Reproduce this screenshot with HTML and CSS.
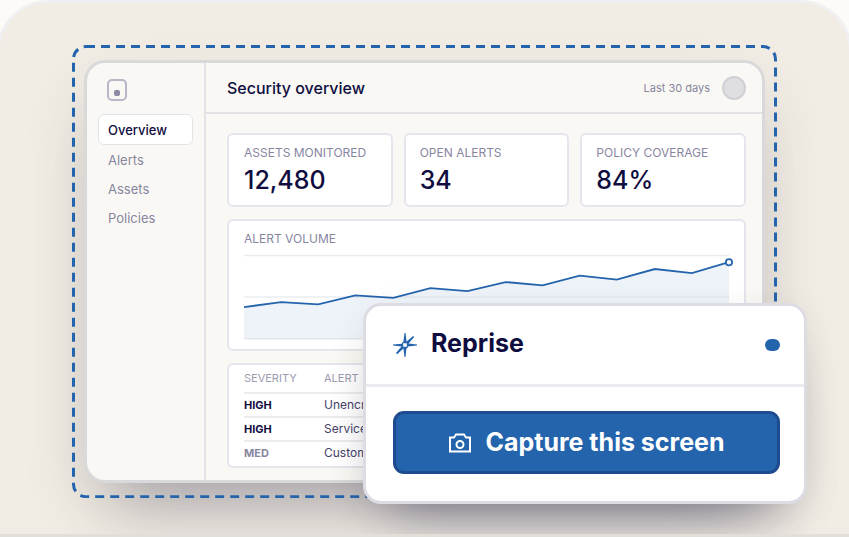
FILE: index.html
```html
<!DOCTYPE html>
<html lang="en">
<head>
<meta charset="utf-8">
<title>Reprise – Security overview</title>
<link rel="stylesheet" href="styles.css">
</head>
<body>
<main class="stage">
  <div class="capture">
    <svg class="marquee" aria-hidden="true"><rect x="1.5" y="1.5" rx="12.5"/></svg>
    <div class="window">
      <aside class="sidebar">
        <svg class="brand" viewBox="0 0 20 22" aria-hidden="true"><rect x="1" y="1" width="18" height="20" rx="4"/><rect class="brand-dot" x="7" y="11" width="6" height="6" rx="2"/></svg>
        <nav class="nav">
          <a class="nav-item active" href="#">Overview</a>
          <a class="nav-item" href="#">Alerts</a>
          <a class="nav-item" href="#">Assets</a>
          <a class="nav-item" href="#">Policies</a>
        </nav>
      </aside>
      <section class="content">
        <header class="topbar">
          <h1>Security overview</h1>
          <span class="period">Last 30 days</span>
          <span class="avatar"></span>
        </header>
        <div class="board">
          <div class="stats">
            <div class="card stat"><span class="label">ASSETS MONITORED</span><strong>12,480</strong></div>
            <div class="card stat"><span class="label">OPEN ALERTS</span><strong>34</strong></div>
            <div class="card stat"><span class="label">POLICY COVERAGE</span><strong>84%</strong></div>
          </div>
          <div class="card chart">
            <span class="label">ALERT VOLUME</span>
            <svg viewBox="0 0 484 88" aria-hidden="true">
              <path class="area" d="M0 54 37 49 74 51 111 42 149 45 186 35 223 38 261 29 298 32 335 22 372 26 410 16 447 20 484 9V86H0Z"/>
              <path class="grid" d="M0 2.5H484M0 44H484M0 85.5H484"/>
              <path class="line" d="M0 54 37 49 74 51.3 111 42.3 149 44.8 186 35 223 38 261 29 298 32.3 335 22.5 372 26.5 410 16 447 20 484 9.2"/>
              <circle class="point" cx="484" cy="9.2" r="3.1"/>
            </svg>
          </div>
          <div class="card alerts">
            <table>
              <thead><tr><th>SEVERITY</th><th>ALERT</th></tr></thead>
              <tbody>
                <tr><td class="sev">HIGH</td><td>Unencrypted</td></tr>
                <tr><td class="sev">HIGH</td><td>Service</td></tr>
                <tr><td class="sev med">MED</td><td>Custom</td></tr>
              </tbody>
            </table>
          </div>
        </div>
      </section>
    </div>
  </div>
  <section class="popup">
    <header class="popup-head">
      <svg class="spark" viewBox="0 0 24 24" aria-hidden="true"><path fill-rule="evenodd" d="M11.500 0H12.500L13.600 8.500 20.200 3 21.200 4 15.600 10.600 24 11.500V12.500L15 13.500 14.500 15 13.400 15.400 12.500 24H11.500L10.400 15.500 4.200 21.200 3 20 8.500 13.600 0 12.500V11.500L8.800 10.700 9.500 9.500 10.400 8.600ZM10.200 10.200V13.800H13.800V10.200Z"/></svg>
      <h2>Reprise</h2>
      <span class="status"></span>
    </header>
    <div class="popup-body">
      <button class="shoot" type="button">
        <svg viewBox="0 0 22 20" aria-hidden="true"><path d="M1 4.500H5L7 1.500H15L17 4.500H21V18.500H1Z"/><circle cx="11" cy="11.500" r="3.500"/></svg>
        <span>Capture this screen</span>
      </button>
    </div>
  </section>
</main>
</body>
</html>
```

FILE: styles.css
```css
* { box-sizing: border-box; }

body {
  margin: 0;
  background: #fcfbf7;
  font-family: Inter, "Liberation Sans", sans-serif;
  color: #0f0d40;
  overflow-x: hidden;
}

h1, h2 { margin: 0; }

.stage {
  position: relative;
  min-height: 100vh;
  margin: 0 -3px;
  padding: 42px 72px 36px;
  border: 3px solid #f0f0f2;
  border-bottom-color: #e2dfda;
  border-radius: 51px 51px 0 0;
  background: #f1ece4;
  overflow: hidden;
}

.capture { position: relative; padding: 15px 12px; }

.marquee {
  position: absolute;
  inset: 0;
  width: 100%;
  height: 100%;
  z-index: 1;
  pointer-events: none;
}
.marquee rect {
  width: calc(100% - 3px);
  height: calc(100% - 3px);
  fill: none;
  stroke: #2464ad;
  stroke-width: 3;
  stroke-dasharray: 9 6;
}

.window {
  display: flex;
  border: 3px solid #d9d8da;
  border-radius: 21px;
  background: #f9f8f4;
  box-shadow: 0 48px 60px -36px rgba(15, 13, 64, .26), 0 30px 66px -6px rgba(60, 58, 50, .18);
}

.sidebar {
  flex: none;
  width: 119px;
  padding: 16px 11px;
  border-right: 2px solid #e3e2e7;
}
.brand {
  display: block;
  width: 20px;
  height: 22px;
  margin: 0 0 13px 9px;
  fill: none;
  stroke: #b9b7c7;
  stroke-width: 2;
}
.brand-dot { fill: #8d8ba4; stroke: none; }
.nav { display: flex; flex-direction: column; }
.nav-item {
  padding: 1px 10px 0;
  font-size: 13px;
  line-height: 28px;
  color: #88869f;
  text-decoration: none;
}
.nav-item.active {
  padding: 1px 9px 0;
  border: 1px solid #e3e2e7;
  border-radius: 6px;
  background: #fff;
  color: #0f0d40;
  font-weight: 500;
}

.content { flex: 1; min-width: 0; }
.topbar {
  display: flex;
  align-items: center;
  height: 51px;
  padding: 0 16px 0 21px;
  border-bottom: 2px solid #e3e2e7;
}
.topbar h1 { font-size: 16px; font-weight: 500; }
.period { margin-left: auto; font-size: 11px; color: #88869f; }
.avatar {
  width: 24px;
  height: 24px;
  margin-left: 12px;
  border: 2px solid #d0cfd6;
  border-radius: 50%;
  background: #dfdfe2;
}

.board {
  display: flex;
  flex-direction: column;
  gap: 12px;
  padding: 19px 16px 12px 21px;
}
.card {
  padding: 0 15px;
  border: 2px solid #e6e5ed;
  border-radius: 6px;
  background: #fff;
}
.label { display: block; font-size: 12px; line-height: 16px; color: #88869f; }
.stats { display: grid; grid-template-columns: repeat(3, 1fr); gap: 11px; }
.stat { padding: 10px 14px 6px; white-space: nowrap; }
.stat:first-child { padding-left: 15px; }
.stat strong { display: block; font-size: 25px; line-height: 38px; font-weight: 500; }

.chart { padding-top: 10px; padding-bottom: 8px; }
.chart svg { display: block; width: 100%; margin-top: 6px; overflow: visible; }
.area { fill: #edf3f8; }
.grid { stroke: #dcdfe6; stroke-opacity: .6; stroke-width: 1.5; }
.line { fill: none; stroke: #2464ad; stroke-width: 1.8; }
.point { fill: #fff; stroke: #2464ad; stroke-width: 1.8; }

.alerts { padding-bottom: 2px; }
.alerts table { width: 100%; border-collapse: collapse; table-layout: fixed; }
.alerts th, .alerts td { padding: 0; text-align: left; font-size: 12px; line-height: 22px; }
.alerts th { font-size: 11px; line-height: 27px; font-weight: 400; color: #9d9bb0; }
.alerts th:first-child { width: 80px; }
.alerts tbody tr { border-top: 2px solid #ededf1; }
.alerts td { color: #45436a; }
.alerts .sev { font-size: 11px; font-weight: 700; color: #0f0d40; }
.alerts .med { color: #88869f; }

.popup {
  position: absolute;
  z-index: 2;
  right: 42px;
  bottom: 30px;
  width: 444px;
  border: 3px solid #dcdce2;
  border-radius: 18px;
  background: #fff;
  box-shadow: 0 36px 54px -30px rgba(15, 13, 64, .38), 0 12px 42px -6px rgba(60, 58, 50, .14);
}
.popup-head {
  display: flex;
  align-items: center;
  height: 81px;
  padding: 0 24px 0 27px;
  border-bottom: 3px solid #eaeaf0;
}
.spark { width: 24px; height: 24px; margin-right: 14px; fill: #2464ad; }
.popup-head h2 { padding-bottom: 4px; font-size: 25px; line-height: 30px; font-weight: 700; }
.status { width: 15px; height: 12px; margin-left: auto; border-radius: 6px; background: #2464ad; }
.popup-body { padding: 24px 24px 27px 27px; }
.shoot {
  display: flex;
  align-items: center;
  justify-content: center;
  gap: 15px;
  width: 100%;
  height: 63px;
  padding: 0;
  border: 3px solid #1e4b8f;
  border-radius: 11px;
  background: #2464ad;
  color: #fff;
  font: 700 25px Inter, "Liberation Sans", sans-serif;
}
.shoot span { padding-bottom: 2px; }
.shoot svg { width: 22px; height: 20px; fill: none; stroke: #fff; stroke-width: 2; }
```
